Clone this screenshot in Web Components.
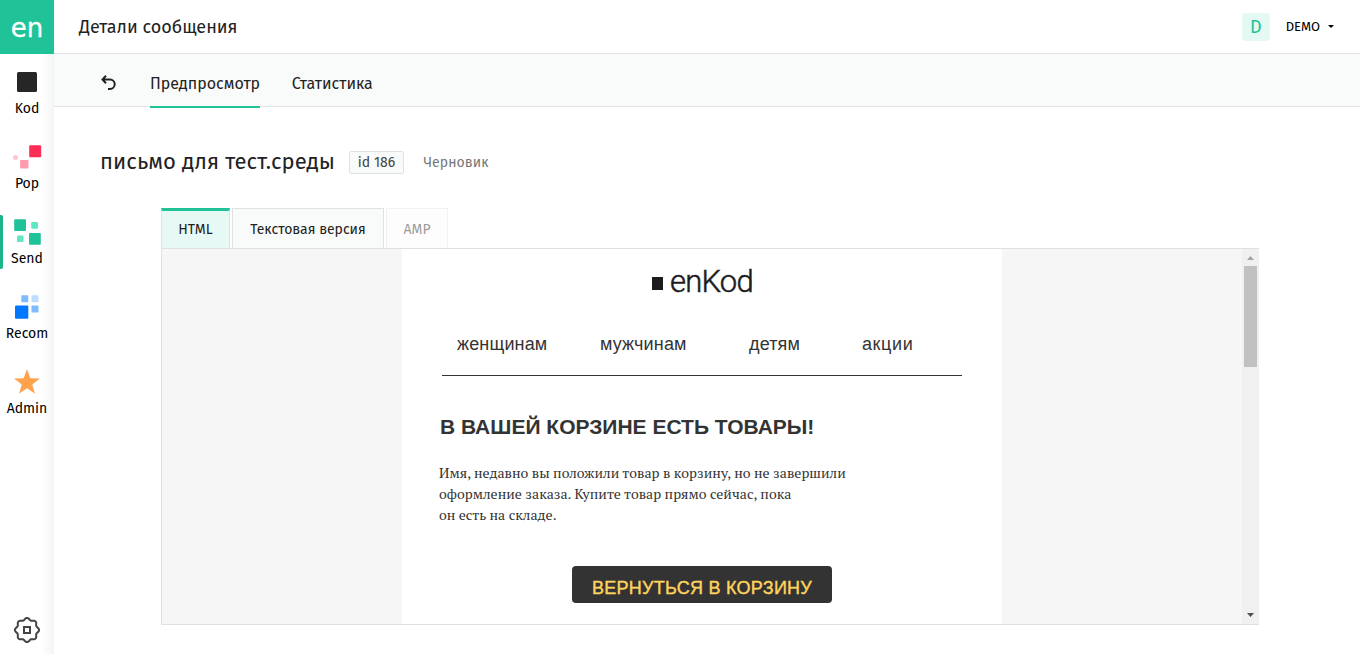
<!DOCTYPE html>
<html lang="ru">
<head>
<meta charset="utf-8">
<title>Детали сообщения</title>
<style>
  body {
    margin: 0;
    background: #fff;
  }
</style>
</head>
<body>
<en-app></en-app>

<script>
class EnNavItem extends HTMLElement {
  constructor() {
    super();
    this.attachShadow({ mode: "open" });
  }

  connectedCallback() {
    this.shadowRoot.innerHTML = `
      <style>
        :host {
          display: flex;
          flex-direction: column;
          align-items: center;
          position: relative;
          height: 54px;
          font-size: 14px;
          line-height: 20px;
          color: #000;
        }

        :host([active])::before {
          content: "";
          position: absolute;
          left: 0;
          top: 0;
          width: 3px;
          height: 54px;
          border-radius: 0 2px 2px 0;
          background: #1db48c;
        }

        ::slotted(svg) {
          display: block;
          width: 30px;
          height: 30px;
          margin: 2px 0;
        }
      </style>
      <slot name="icon"></slot>
      <span>${this.getAttribute("label") || ""}</span>
    `;
  }
}

class EnSidebar extends HTMLElement {
  constructor() {
    super();
    this.attachShadow({ mode: "open" });
  }

  // wavy outline of the settings icon, eight rounded teeth
  gearPath() {
    const points = [];
    for (let a = 0; a < 360; a += 3) {
      const t = (a * Math.PI) / 180;
      const r = 11.1 + Math.cos(8 * t);
      points.push(`${(14 + r * Math.cos(t)).toFixed(2)} ${(14 + r * Math.sin(t)).toFixed(2)}`);
    }
    return `M${points.join("L")}Z`;
  }

  connectedCallback() {
    this.shadowRoot.innerHTML = `
      <style>
        :host {
          display: flex;
          flex-direction: column;
          width: 54px;
          background: linear-gradient(to right, #fff 42px, #f4f4f4 54px);
        }

        .brand {
          display: flex;
          align-items: center;
          justify-content: center;
          height: 54px;
          margin-bottom: 11px;
          box-sizing: border-box;
          padding-top: 1px;
          background: #1fc397;
          color: #fff;
          font: 26px/1 "DejaVu Sans", sans-serif;
          -webkit-text-stroke: 0.3px #fff;
        }

        nav {
          display: flex;
          flex-direction: column;
          gap: 21px;
          flex: 1;
        }

        .gear {
          align-self: center;
          margin-bottom: 10px;
        }
      </style>
      <div class="brand">en</div>
      <nav>
        <en-nav-item label="Kod">
          <svg slot="icon" viewBox="0 0 30 30"><rect x="5" y="5" width="20" height="20" rx="1.5" fill="#262626"/></svg>
        </en-nav-item>
        <en-nav-item label="Pop">
          <svg slot="icon" viewBox="0 0 30 30">
            <rect x="17.200" y="3.200" width="12" height="12" rx="1" fill="#ff2c55"/>
            <rect x="8" y="18" width="8.500" height="8.500" rx="1" fill="#ff9bae"/>
            <circle cx="3.500" cy="15.500" r="2.500" fill="#ffc6d1"/>
          </svg>
        </en-nav-item>
        <en-nav-item label="Send" active>
          <svg slot="icon" viewBox="0 0 30 30">
            <rect x="2.200" y="2.200" width="11.800" height="11.800" rx="1" fill="#1fc397"/>
            <rect x="19.200" y="5" width="6.800" height="6.800" rx="1" fill="#5fe7c4"/>
            <rect x="5" y="18.500" width="6.500" height="6.500" rx="1" fill="#5fe7c4"/>
            <rect x="17" y="16" width="11.800" height="11.800" rx="1" fill="#1fc397"/>
          </svg>
        </en-nav-item>
        <en-nav-item label="Recom">
          <svg slot="icon" viewBox="0 0 30 30">
            <rect x="9.300" y="3.300" width="7" height="7" rx=".8" fill="#80bbff"/>
            <rect x="19.500" y="3.300" width="7" height="7" rx=".8" fill="#bfddff"/>
            <rect x="19.500" y="13.500" width="7" height="7" rx=".8" fill="#80bbff"/>
            <rect x="3" y="13.500" width="13.300" height="13.300" rx="1" fill="#0077ff"/>
          </svg>
        </en-nav-item>
        <en-nav-item label="Admin">
          <svg slot="icon" viewBox="0 0 30 30">
            <path d="M15 2l3.300 9.300 9.700.2-7.800 6 2.800 9.300L15 21.300l-8 5.500 2.800-9.300-7.800-6 9.700-.2z" fill="#ffa24c"/>
          </svg>
        </en-nav-item>
      </nav>
      <svg class="gear" width="28" height="28" viewBox="0 0 28 28" fill="none" stroke="#444" stroke-width="2">
        <path stroke-linejoin="round" d="${this.gearPath()}"/>
        <rect x="11" y="11" width="6" height="6"/>
      </svg>
    `;
  }
}

class EnTopbar extends HTMLElement {
  constructor() {
    super();
    this.attachShadow({ mode: "open" });
  }

  connectedCallback() {
    this.shadowRoot.innerHTML = `
      <style>
        :host {
          display: flex;
          align-items: center;
          box-sizing: border-box;
          height: 54px;
          padding: 0 26px 0 25px;
          border-bottom: 1px solid #e0e3e3;
        }

        .title {
          flex: 1;
          font-size: 18px;
        }

        .avatar {
          width: 28px;
          margin-right: 16px;
          border-radius: 4px;
          background: #e5f9f4;
          color: #1fc397;
          font-size: 18px;
          line-height: 28px;
          text-align: center;
        }

        .user {
          font-size: 13px;
          color: #000;
        }

        .caret {
          margin-left: 8px;
          border: 3px solid transparent;
          border-top-color: #000;
          border-bottom: 0;
        }
      </style>
      <span class="title"><slot></slot></span>
      <span class="avatar">D</span>
      <span class="user">DEMO</span>
      <span class="caret"></span>
    `;
  }
}

class EnPageTabs extends HTMLElement {
  constructor() {
    super();
    this.attachShadow({ mode: "open" });
  }

  connectedCallback() {
    this.shadowRoot.innerHTML = `
      <style>
        :host {
          display: flex;
          box-sizing: border-box;
          height: 53px;
          padding-left: 46px;
          border-bottom: 1px solid #e0e3e3;
          background: #f9fbfa;
          font-size: 16px;
          line-height: 60px;
        }

        svg {
          margin: 21px 33px 0 0;
        }

        .tab {
          height: 52px;
          margin-right: 31.500px;
        }

        .tab.active {
          border-bottom: 2px solid #1fc397;
        }
      </style>
      <svg width="17" height="17" viewBox="0 0 17 17" fill="none" stroke="#222" stroke-width="2">
        <path d="M6 .8L2.500 4.500 6 8.200M2.500 4.500h7.500a4.700 4.700 0 0 1 0 9.400H8"/>
      </svg>
      <span class="tab active">Предпросмотр</span>
      <span class="tab">Статистика</span>
    `;
  }
}

class EnMessageHead extends HTMLElement {
  constructor() {
    super();
    this.attachShadow({ mode: "open" });
  }

  connectedCallback() {
    this.shadowRoot.innerHTML = `
      <style>
        :host {
          display: flex;
          align-items: center;
          height: 30px;
          padding: 40px 0 0 46px;
          font-size: 14px;
        }

        .name {
          width: 249px;
          padding-bottom: 2px;
          font-size: 22px;
          letter-spacing: 0.06px;
          white-space: nowrap;
        }

        .id {
          box-sizing: border-box;
          width: 55px;
          height: 23px;
          margin: 0 19.500px 0 0;
          border: 1px solid #dfe2e2;
          border-radius: 2px;
          background: #f9fbfa;
          color: #444;
          line-height: 21px;
          text-align: center;
        }

        .status {
          color: #777;
          letter-spacing: 0.05px;
        }
      </style>
      <span class="name">${this.getAttribute("name") || ""}</span>
      <span class="id">id ${this.getAttribute("message-id") || ""}</span>
      <span class="status">${this.getAttribute("status") || ""}</span>
    `;
  }
}

class EnPreview extends HTMLElement {
  constructor() {
    super();
    this.attachShadow({ mode: "open" });
  }

  connectedCallback() {
    this.shadowRoot.innerHTML = `
      <style>
        :host {
          display: block;
          width: 1098px;
          margin: 31px 0 0 107px;
        }

        .tabs {
          display: flex;
          gap: 2px;
          font-size: 14px;
          line-height: 41px;
          text-align: center;
        }

        .tab {
          box-sizing: border-box;
          height: 40px;
          border: 1px solid #dfe2e2;
          border-bottom: 0;
          background: #f9fbfa;
        }

        .tab.active {
          width: 69px;
          border-top: 3px solid #1fc397;
          background: #e7f9f5;
          line-height: 37px;
        }

        .tab.text {
          width: 152px;
        }

        .tab.disabled {
          width: 62px;
          opacity: 0.45;
        }

        .frame {
          display: flex;
          box-sizing: border-box;
          height: 377px;
          border: solid #e0e0e4;
          border-width: 1px 0 1px 1px;
          background: #f6f6f6;
        }

        .canvas {
          display: flex;
          justify-content: center;
          flex: 1;
          overflow: hidden;
        }

        .scroll {
          display: flex;
          flex-direction: column;
          align-items: center;
          width: 17px;
          background: #f0f0f0;
        }

        .scroll svg {
          display: block;
        }

        .thumb {
          width: 13px;
          height: 101px;
          margin-bottom: auto;
          background: #c1c1c1;
        }
      </style>
      <div class="tabs">
        <span class="tab active">HTML</span>
        <span class="tab text">Текстовая версия</span>
        <span class="tab disabled">AMP</span>
      </div>
      <div class="frame">
        <div class="canvas"><slot></slot></div>
        <div class="scroll">
          <svg width="17" height="17"><path d="M5 11h7L8.500 7z" fill="#a3a3a3"/></svg>
          <div class="thumb"></div>
          <svg width="17" height="17"><path d="M5 6h7L8.500 10z" fill="#505050"/></svg>
        </div>
      </div>
    `;
  }
}

class EnLetter extends HTMLElement {
  constructor() {
    super();
    this.attachShadow({ mode: "open" });
  }

  connectedCallback() {
    this.shadowRoot.innerHTML = `
      <style>
        :host {
          display: block;
          box-sizing: border-box;
          width: 600px;
          height: 375px;
          padding: 0 40px;
          background: #fff;
          color: #333;
          font-family: "Liberation Sans", Arial, sans-serif;
        }

        .logo {
          display: flex;
          align-items: center;
          height: 32px;
          padding: 17px 0 0 210px;
          color: #1c1c1e;
          font: 300 31px/32px Roboto, sans-serif;
          letter-spacing: -0.8px;
          -webkit-text-stroke: 0.5px #1c1c1e;
        }

        .logo i {
          width: 11px;
          height: 13px;
          margin: 3px 7px 0 0;
          background: #1c1c1e;
        }

        .menu {
          display: grid;
          grid-template-columns: 143px 149px 113px auto;
          height: 77px;
          padding-left: 15px;
          border-bottom: 1px solid #333;
          font-size: 18px;
          line-height: 92px;
          letter-spacing: 0.15px;
        }

        .menu .wide {
          letter-spacing: 0.6px;
        }

        h1 {
          margin: 38px 0 0 -2px;
          font-size: 21px;
          line-height: 26px;
          white-space: nowrap;
        }

        p {
          margin: 22px 0 0 -3px;
          font: 14px/21px "PT Serif", "Liberation Serif", serif;
          letter-spacing: 0.03px;
        }

        .button {
          width: 260px;
          height: 37px;
          margin: 41px auto 0;
          border-radius: 4px;
          background: #333;
          color: #ffd35c;
          font-size: 18px;
          line-height: 44px;
          letter-spacing: 0.27px;
          text-align: center;
          -webkit-text-stroke: 0.4px #ffd35c;
        }
      </style>
      <div class="logo"><i></i>enKod</div>
      <div class="menu"><span>женщинам</span><span>мужчинам</span><span>детям</span><span class="wide">акции</span></div>
      <h1>В ВАШЕЙ КОРЗИНЕ ЕСТЬ ТОВАРЫ!</h1>
      <p>Имя, недавно вы положили товар в корзину, но не завершили<br>оформление заказа. Купите товар прямо сейчас, пока<br>он есть на складе.</p>
      <div class="button">ВЕРНУТЬСЯ В КОРЗИНУ</div>
    `;
  }
}

class EnApp extends HTMLElement {
  constructor() {
    super();
    this.attachShadow({ mode: "open" });
  }

  connectedCallback() {
    this.shadowRoot.innerHTML = `
      <style>
        :host {
          display: flex;
          height: 654px;
          overflow: hidden;
          color: #222;
          font-family: "Fira Sans", "Noto Sans", sans-serif;
        }

        main {
          flex: 1;
        }
      </style>
      <en-sidebar></en-sidebar>
      <main>
        <en-topbar>Детали сообщения</en-topbar>
        <en-page-tabs></en-page-tabs>
        <en-message-head name="письмо для тест.среды" message-id="186" status="Черновик"></en-message-head>
        <en-preview><en-letter></en-letter></en-preview>
      </main>
    `;
  }
}

customElements.define("en-nav-item", EnNavItem);
customElements.define("en-sidebar", EnSidebar);
customElements.define("en-topbar", EnTopbar);
customElements.define("en-page-tabs", EnPageTabs);
customElements.define("en-message-head", EnMessageHead);
customElements.define("en-preview", EnPreview);
customElements.define("en-letter", EnLetter);
customElements.define("en-app", EnApp);
</script>
</body>
</html>
